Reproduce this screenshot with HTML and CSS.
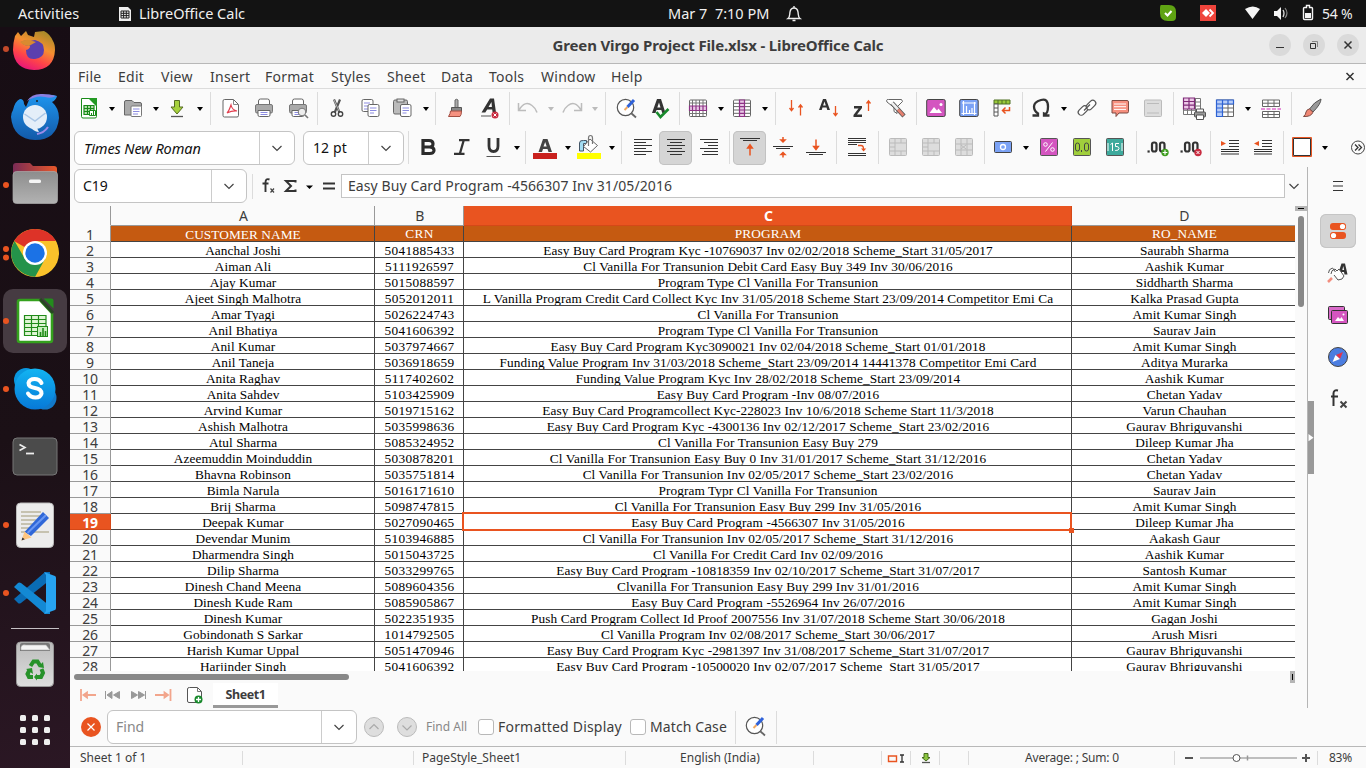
FILE: index.html
```html
<!DOCTYPE html>
<html lang="en">
<head>
<meta charset="utf-8">
<title>Green Virgo Project File.xlsx - LibreOffice Calc</title>
<link rel="stylesheet" href="styles.css">
</head>
<body>
<header class="topbar">
  <span class="activities">Activities</span>
  <svg class="app-icon" viewBox="0 0 14 16"><path d="M1 1h9l3 3v11H1z" fill="#eee"/><path d="M3 5h8v7H3zM3 7.300h8M3 9.600h8M5.600 5v7M8.300 5v7" fill="none" stroke="#222"/></svg>
  <span class="app-name">LibreOffice Calc</span>
  <span class="clock">Mar 7&nbsp; 7:10 PM</span>
  <svg class="bell" viewBox="0 0 16 18"><path d="M2 13.500h12c-2-1.500-1.500-3-2-6.500C11.600 4.500 10 3 8 3S4.400 4.500 4 7c-.5 3.500 0 5-2 6.500zM8 1v2M6.500 15.500h3" fill="none" stroke="#eee" stroke-width="1.400"/></svg>
  <svg class="tray" viewBox="0 0 200 27">
    <path d="M8 5h8q7 0 7 7v5q0 4-4 4h-4q-8 0-8-8V8q0-3 1-3z" fill="#5fa313"/><path d="M12 13l2.500 2.500 4-4.500" fill="none" stroke="#fff" stroke-width="2"/>
    <path d="M47 5h16v16H47z" fill="#ef443b"/><path d="M53 9l4 4-4 4-4-4z" fill="#fff"/><path d="M56.500 9.500l3.500 3.500-3.500 3.500" fill="none" stroke="#fff" stroke-width="1.800"/>
    <path d="M92 9q8-5 15 0l-7.500 10z" fill="#f5f5f5"/>
    <path d="M121 11h3l4-4v13l-4-4h-3z" fill="#f5f5f5"/><path d="M130 10q2 3 0 7" fill="none" stroke="#ddd" stroke-width="1.300"/><path d="M132 8q4 5 0 10" fill="none" stroke="#888" stroke-width="1.200"/>
    <path d="M151.500 7.500h2v-2h3v2h2q1 0 1 1v10q0 1-1 1h-7q-1 0-1-1v-10q0-1 1-1z" fill="none" stroke="#f5f5f5" stroke-width="1.400"/><path d="M152 13h6v5h-6z" fill="#f5f5f5"/>
  </svg>
  <span class="battery">54 %</span>
</header>
<div class="desktop">
<nav class="dock">
  <div class="dock-item first"><svg viewBox="0 0 70 68">
    <defs>
      <linearGradient id="ff" x1=".8" y1="0" x2=".3" y2="1"><stop offset="0" stop-color="#a08a28"/><stop offset=".4" stop-color="#f59030"/><stop offset=".7" stop-color="#ff4548"/><stop offset="1" stop-color="#e6137c"/></linearGradient>
      <linearGradient id="tb" x1="0" y1="0" x2="0" y2="1"><stop offset="0" stop-color="#1f95ee"/><stop offset="1" stop-color="#1259a8"/></linearGradient>
      <linearGradient id="gr" x1="0" y1="0" x2="0" y2="1"><stop offset="0" stop-color="#8d8d8d"/><stop offset="1" stop-color="#b2b2b2"/></linearGradient>
      <linearGradient id="fo" x1="0" y1="0" x2="1" y2="0"><stop offset="0" stop-color="#7a2b55"/><stop offset="1" stop-color="#e9582a"/></linearGradient>
      <linearGradient id="sk" x1="0" y1="0" x2="0" y2="1"><stop offset="0" stop-color="#12b4f2"/><stop offset="1" stop-color="#0779d8"/></linearGradient>
      <linearGradient id="tr" x1="0" y1="0" x2="0" y2="1"><stop offset="0" stop-color="#bbb"/><stop offset="1" stop-color="#dedede"/></linearGradient>
    </defs>
    <circle cx="6" cy="34" r="3" fill="#c2492a"/>
    <path d="M15 21l3-4 3 4 5-5 2 4 6 2 1-5 9-1q6 3 9 10 2 3 2 9-1 20-21 20-20-1-21-20 0-7 2-14z" fill="url(#ff)"/>
    <path d="M21 27q5-3 9-1l5-1q9 2 9 10t-9 9-9-9q4-1 4-4-6 0-9-4z" fill="#5b3fae"/>
    <path d="M20 27q6-3 9-2l7 2-7 4q-5 0-9-4z" fill="#d98a30"/></svg></div>
  <div class="dock-item"><svg viewBox="0 0 70 68">
    <path d="M13 27q2-9 7-11 4 0 4 5l2 3 3-7q5-5 14-5 9-1 14 1-1 4-5 6 7 6 7 16-2 22-24 22Q13 56 11 34q0-4 2-7z" fill="url(#tb)"/>
    <path d="M27 18q5-8 16-7 6 0 13 2-5 3-11 1-9-2-18 4z" fill="#8b7fe0"/><path d="M48 44q-4 6-11 7" stroke="#9b8be8" stroke-width="2" fill="none"/>
    <circle cx="35" cy="34" r="12" fill="#e4eef9"/><path d="M24.500 31l10.500 7 10.500-8" fill="none" stroke="#aac6e6" stroke-width="1.500"/><path d="M31 45q4 4 8 4l-2-4z" fill="#e4eef9"/><circle cx="37" cy="18" r="1" fill="#222"/></svg></div>
  <div class="dock-item"><svg viewBox="0 0 70 68"><circle cx="6" cy="34" r="3" fill="#e95420"/><path d="M13 15q0-3 3-3h14l3 3h21q3 0 3 3v14H13z" fill="url(#fo)"/><rect x="13" y="20.500" width="44.500" height="32" rx="3.500" fill="url(#gr)" stroke="#aaa" stroke-width=".7"/><rect x="29" y="28.500" width="12" height="3.500" rx="1.500" fill="#f5f5f5"/></svg></div>
  <div class="dock-item"><svg viewBox="0 0 70 68"><circle cx="6" cy="30" r="3" fill="#e95420"/><circle cx="6" cy="38.500" r="3" fill="#e95420"/>
    <circle cx="35" cy="34" r="24" fill="#f9c22a"/><path d="M35 34L14 22Q22 10 35 10q14 0 21 12z" fill="#dd3328"/><path d="M14.500 22Q7 35 16 48q7 9 20 10l10-18-11-6-10 6z" fill="#24934a"/><path d="M35 22h21q5 12-1 24-7 11-20 12l10-18z" fill="#fac22b"/><circle cx="35" cy="34" r="12" fill="#fff"/><circle cx="35" cy="34" r="9.700" fill="#1b72e6"/></svg></div>
  <div class="dock-item"><svg viewBox="0 0 70 68"><rect x="3" y="2" width="64" height="64" rx="10" fill="#463b42"/><circle cx="6" cy="34" r="3" fill="#e95420"/>
    <path d="M20 13H40l12 13v27q0 2-2 2H20q-2 0-2-2V15q0-2 2-2z" fill="#fff" stroke="#34a11d" stroke-width="2.600"/><path d="M43.500 11.500h8q2 0 2 2v8z" fill="#238c1d"/><path d="M40 12l13 14" stroke="#274722" stroke-width="3"/>
    <path d="M24.500 28.500H46v20H24.500zM24.500 32.500H46M24.500 36.500H46M24.500 40.500H46M24.500 44.500H46M31.500 28v20M38.500 28v20" fill="#dff5d4" stroke="#218b19" stroke-width="1.200"/><rect x="37.500" y="39.500" width="10" height="10" fill="#c6eebc" stroke="#218b19"/><path d="M40.500 49v-4M43 49v-8M45.500 49v-5" stroke="#218b19" stroke-width="1.600"/></svg></div>
  <div class="dock-item"><svg viewBox="0 0 70 68"><circle cx="6" cy="34" r="3" fill="#e95420"/><circle cx="26" cy="25" r="12" fill="#0997df"/><circle cx="45" cy="43" r="11.500" fill="#1279c9"/><circle cx="35" cy="34" r="20.500" fill="url(#sk)"/><path d="M41.500 28q-2-4-7-4t-6 4q0 4 6.500 5t6.500 5.500q-1 4-6 4t-7.500-4" fill="none" stroke="#fff" stroke-width="4" stroke-linecap="round"/></svg></div>
  <div class="dock-item"><svg viewBox="0 0 70 68"><rect x="13" y="15" width="44" height="37" rx="4" fill="#4b4b4b" stroke="#777"/><path d="M19.500 21.500l5.500 3-5.500 3" fill="none" stroke="#eee" stroke-width="1.600"/><path d="M26 30.500h8" stroke="#eee" stroke-width="1.800"/></svg></div>
  <div class="dock-item"><svg viewBox="0 0 70 68"><circle cx="6" cy="34" r="3" fill="#e95420"/><rect x="16.500" y="12" width="37" height="44.500" rx="4" fill="#ececec" stroke="#bbb"/><path d="M21 21h20M21 25h20M21 29h15M21 33h14M21 37h10M21 41h28" stroke="#c6c2b0" stroke-width="1.800"/><path d="M24.500 41L43 21l6 6-18 18z" fill="#2f67d8"/><path d="M27.500 42L46 24" stroke="#6b98f2" stroke-width="2"/><path d="M24.500 40.500l7 6-10 3z" fill="#ffc680"/><path d="M22.500 46.500l2.300 1.800-3.300 1.200z" fill="#333"/></svg></div>
  <div class="dock-item"><svg viewBox="0 0 70 68"><circle cx="6" cy="34" r="3" fill="#e95420"/><path d="M14 40l4 4q1 1 3 0l29-23V13h-5z" fill="#0a6cb5"/><path d="M14 28l4-4q1-1 3 0l29 23v8h-5z" fill="#1389d4"/><path d="M44 13l11 4q1 .5 1 2v30q0 1.500-1 2l-11 4 2-3V16z" fill="#27a4f1"/></svg></div>
  <hr class="dock-line">
  <div class="dock-item"><svg viewBox="0 0 70 68"><rect x="16.500" y="12" width="37" height="44.500" rx="4" fill="url(#tr)" stroke="#999"/><path d="M20 15q0-2 2-2h26q2 0 2 2v6H20z" fill="#777"/><path d="M21 20q-1-6 5-5h20l4 5z" fill="#f4f4f4" stroke="#aaa" stroke-width=".6"/><g fill="none" stroke="#27922a" stroke-width="4"><path d="M30.500 36l3-4.500h4l2.500 4"/><path d="M41.500 39l1.500 4-2 4h-4"/><path d="M33 47h-4l-1.500-3 2-4"/></g><path d="M38 37l6 1-1-6zM37 43.500v7l-3-3.500zM26 39l6-1 1 6z" fill="#27922a"/></svg></div>
  <div class="app-grid"><i></i><i></i><i></i><i></i><i></i><i></i><i></i><i></i><i></i></div>
</nav>
<main class="window">
  <div class="titlebar"><h1>Green Virgo Project File.xlsx - LibreOffice Calc</h1>
    <div class="win-buttons">
      <span><svg viewBox="0 0 22 22"><path d="M7 13.500h8" stroke="#333"/></svg></span>
      <span><svg viewBox="0 0 22 22"><path d="M7.500 9.500h5v5h-5z" fill="none" stroke="#333"/><path d="M9 7.500h5.500V13" fill="none" stroke="#888"/></svg></span>
      <span><svg viewBox="0 0 22 22"><path d="M7.500 7.500l7 7m0-7l-7 7" stroke="#333" stroke-width="1.500"/></svg></span>
    </div>
  </div>
  <div class="menubar"><span>File</span><span>Edit</span><span>View</span><span>Insert</span><span>Format</span><span>Styles</span><span>Sheet</span><span>Data</span><span>Tools</span><span>Window</span><span>Help</span><svg class="doc-close" viewBox="0 0 12 12"><path d="M2.500 2l7 7m0-7l-7 7" stroke="#333" stroke-width="1.500"/></svg></div>

  <div class="toolbar standard">
    <span class="b"><svg viewBox="0 0 24 24"><path d="M4.500 2.500h9l6 6v12q0 1.500-1.500 1.500H6q-1.500 0-1.500-1.500z" fill="#fff" stroke="#188a18"/><path d="M11 2h9v9z" fill="#239a23"/><path d="M7 9.500h10v9H7zM7 12.500h10M7 15.500h10M10.500 9v10M13.500 9v10" fill="#b9e0b0" stroke="#188a18" stroke-width="1.200"/><path d="M12.500 14.500h6v5h-6z" fill="#fff" stroke="#188a18"/><path d="M14.500 19v-2m2 2v-4" stroke="#188a18"/></svg></span><i class="a"></i>
    <span class="b"><svg viewBox="0 0 24 24"><path d="M3.500 19V6q0-1.500 1.500-1.500h6l2 2h6q1.500 0 1.500 1.500v3" fill="#aaa" stroke="#666"/><path d="M3.500 19h7V8h-7z" fill="#aaa"/><path d="M3.500 8v11h7" fill="none" stroke="#666"/><rect x="10" y="10" width="10.500" height="10.500" rx="1" fill="#fff" stroke="#777"/><path d="M12 13h6.500M12 15.500h6.500M12 18h5" stroke="#8b8be0"/></svg></span><i class="a"></i>
    <span class="b"><svg viewBox="0 0 24 24"><path d="M9.500 4.500h5V11h3.500l-6 7-6-7h3.500z" fill="#a6d13c" stroke="#566b23"/><path d="M6 20.500h12" stroke="#555" stroke-width="1.300"/></svg></span><i class="a"></i>
    <i class="s s10"></i>
    <span class="b"><svg viewBox="0 0 24 24"><path d="M5.500 3.500h9l5 5v11q0 1.500-1.500 1.500H5.500q-1.500 0-1.500-1.500V5q0-1.500 1.500-1.500z" fill="#fff" stroke="#666"/><path d="M14.500 3.500v5h5" fill="none" stroke="#888"/><path d="M8 17q2-2 4-8 1 5 6 6-5-.5-10 2" fill="none" stroke="#e24050" stroke-width="1.200"/></svg></span>
    <span class="b"><svg viewBox="0 0 24 24"><use href="#pr"/></svg></span>
    <span class="b"><svg viewBox="0 0 24 24"><use href="#pr" x="1"/><circle cx="17" cy="16" r="3.800" fill="#eee" stroke="#777"/><path d="M20 19l3 3" stroke="#777" stroke-width="1.600"/></svg></span>
    <i class="s s7"></i>
    <span class="b"><svg viewBox="0 0 24 24"><path d="M9 3.500l5.500 13M15 3.500L9.500 17" stroke="#555" stroke-width="2.200"/><path d="M9 4l5 11" stroke="#ddd" stroke-width=".7"/><circle cx="8.500" cy="18" r="2.200" fill="#fff" stroke="#444" stroke-width="1.400"/><circle cx="15.500" cy="18" r="2.200" fill="#fff" stroke="#444" stroke-width="1.400"/></svg></span>
    <span class="b"><svg viewBox="0 0 24 24"><rect x="4" y="3.500" width="11" height="12" rx="1.500" fill="#fff" stroke="#666"/><path d="M6 7h6M6 10h4M6 13h4" stroke="#8b8be0"/><rect x="10" y="8.500" width="11" height="12" rx="1.500" fill="#fff" stroke="#666"/><path d="M12 12h6.500M12 14.500h6.500M12 17h4" stroke="#8b8be0"/></svg></span>
    <span class="b"><svg viewBox="0 0 24 24"><rect x="2.500" y="4" width="14" height="14" rx="1.500" fill="#bbb" stroke="#666"/><rect x="6" y="3" width="7" height="3" fill="#ddd" stroke="#666"/><rect x="9.500" y="8.500" width="10.500" height="12" rx="1.500" fill="#fff" stroke="#666"/><path d="M11.500 12h6.500M11.500 14.500h6.500M11.500 17h4" stroke="#8b8be0"/></svg></span><i class="a"></i>
    <i class="s s9"></i>
    <span class="b"><svg viewBox="0 0 24 24"><path d="M11 12V4q1.500-1.500 3 0v8z" fill="#aaa" stroke="#666"/><path d="M7.500 11.500h10v4h-10z" fill="#888" stroke="#555"/><path d="M6.500 15h11q0 4-1.500 5.500H4.500q2-3 2-5.500z" fill="#f59180" stroke="#a34e42"/></svg></span>
    <span class="b"><svg viewBox="0 0 24 24"><path d="M4.500 16.500L13 2.500h4l2 14h-3.400l-.4-3h-5L8.300 16.500zM11.500 11h3.400L14.500 6z" fill="#333"/><path d="M4 20h10" stroke="#555"/><circle cx="18" cy="19" r="3.500" fill="#c92c41"/><path d="M16.500 17.500l3 3m0-3l-3 3" stroke="#fff"/></svg></span>
    <i class="s s6"></i>
    <span class="b"><svg viewBox="0 0 24 24"><path d="M2.500 7v7.500h7.500M3 14Q9 4 16 9.500q4 3 5 7" fill="none" stroke="#bcbcbc" stroke-width="1.500"/></svg></span><i class="a dim"></i>
    <span class="b"><svg viewBox="0 0 24 24"><path d="M21.500 7v7.500H14M21 14Q15 4 8 9.500q-4 3-5 7" fill="none" stroke="#bcbcbc" stroke-width="1.500"/></svg></span><i class="a dim"></i>
    <i class="s s10"></i>
    <span class="b"><svg viewBox="0 0 24 24"><use href="#fr"/></svg></span>
    <span class="b"><svg viewBox="0 0 24 24"><path d="M5 17L10 3h4l4.500 14h-3.200l-1-3H9.500l-1 3zM10.300 11.500h3.200L12 6.500z" fill="#333"/><path d="M9.500 16l4 5 8-8" fill="none" stroke="#188a2c" stroke-width="2.600"/></svg></span>
    <i class="s s6"></i>
    <span class="b"><svg viewBox="0 0 24 24"><rect x="3.500" y="4" width="17" height="16.500" rx="1" fill="#fff" stroke="#666"/><path d="M3.500 7h17M3.500 17.500h17M6.500 4v16M10 4v16M13.500 4v16M17 4v16" stroke="#777"/><path d="M3.500 10h17v4.500h-17zM6.500 10v5M10 10v5M13.500 10v5M17 10v5" fill="#e9c8e6" stroke="#8e3286" stroke-width="1.200"/></svg></span><i class="a"></i>
    <span class="b"><svg viewBox="0 0 24 24"><rect x="3.500" y="4" width="17" height="16.500" rx="1" fill="#fff" stroke="#666"/><path d="M3.500 7.300h17M3.500 10.600h17M3.500 14h17M3.500 17.300h17" stroke="#666"/><path d="M9.500 4h5v16.500h-5zM9.500 7.300h5M9.500 10.600h5M9.500 14h5M9.500 17.300h5" fill="#e9c8e6" stroke="#8e3286" stroke-width="1.200"/></svg></span><i class="a"></i>
    <i class="s s10"></i>
    <span class="b"><svg viewBox="0 0 24 24"><path d="M7.500 4v11M5.500 12l2 2.700 2-2.700M16.500 19.500V9M14.500 11.500l2-2.700 2 2.700" fill="none" stroke="#e95420" stroke-width="1.300"/></svg></span>
    <span class="b"><svg viewBox="0 0 24 24"><path d="M2 14L6 3h3l4 11h-2.700l-.8-2.500h-4L4.700 14zM6.100 9.500h2.700L7.500 5.500z" fill="#333"/><path d="M18.500 10v9.500M16.500 17l2 2.700 2-2.700" fill="none" stroke="#e95420" stroke-width="1.300"/></svg></span>
    <span class="b"><svg viewBox="0 0 24 24"><path d="M4 10h8v2l-5 6.500h5v2.500H3.500v-2l5-6.500H4z" fill="#333"/><path d="M18.500 15V5M16.500 7.500l2-2.700 2 2.700" fill="none" stroke="#e95420" stroke-width="1.300"/></svg></span>
    <span class="b"><svg viewBox="0 0 24 24"><path d="M3.500 4.500q0-1 2-1h13l1 2-5.500 5.500v6.500l-3-2v-4L4 6z" fill="#fff" stroke="#666"/><path d="M9 7l12 13" stroke="#555" stroke-width="4.400"/><path d="M8.500 6.500l6.500 7" stroke="#eee" stroke-width="2.600"/><path d="M15 13.500l5.500 6" stroke="#e5806f" stroke-width="2.800"/></svg></span>
    <i class="s s8"></i>
    <span class="b"><svg viewBox="0 0 24 24"><rect x="2.700" y="3.500" width="18.500" height="17" rx="1.500" fill="#d455c0" stroke="#444"/><path d="M5.500 17l4.500-6 3 3.500 1.500-2L18 17z" fill="#fff"/><circle cx="17" cy="8.500" r="1.500" fill="#fff"/></svg></span>
    <span class="b"><svg viewBox="0 0 24 24"><rect x="2.700" y="3.500" width="18.500" height="17" rx="1.500" fill="#7ba2f5" stroke="#444"/><path d="M6.500 5v14M4.500 17.500h15M17.500 6v13M5 7h14M9.500 17v-7M12.500 17v-3M15 17v-5" fill="none" stroke="#fff" stroke-width="1.200"/></svg></span>
    <span class="b"><svg viewBox="0 0 24 24"><path d="M4 4h16v4H4zM8 4v4M12 4v4M16 4v4" fill="#9ac93a" stroke="#507024"/><path d="M4 8h4v12H4zM4 12h4M4 16h4" fill="#fff" stroke="#555"/><path d="M19.500 11v3.500H13M15.500 11.500L12.500 14.500l3 3" fill="none" stroke="#e95420" stroke-width="1.500"/></svg></span>
    <i class="s s6"></i>
    <span class="b"><svg viewBox="0 0 24 24"><path d="M3.500 19.500h5.500v-2q-4-2.500-4-7T12 4t7 6.500-4 7v2h5.500" fill="none" stroke="#333" stroke-width="2.300"/></svg></span><i class="a"></i><i class="gap"></i>
    <span class="b"><svg viewBox="0 0 24 24"><g fill="none" stroke="#555" stroke-width="1.200"><rect x="2.500" y="11.500" width="11" height="6" rx="3" transform="rotate(-45 8 14.500)" fill="#fff"/><rect x="10.500" y="6" width="11" height="6" rx="3" transform="rotate(-45 16 9)" fill="#fff"/></g><path d="M9 14.500l6-6" stroke="#555" stroke-width="1.300"/></svg></span>
    <span class="b"><svg viewBox="0 0 24 24"><path d="M4 4.500h15q1.500 0 1.500 1.500v9.500q0 1.500-1.500 1.500h-8L8 20.500V17H4z" fill="#f68f7e" stroke="#7d4b43"/><path d="M6 8h12M6 10.700h12M6 13.400h12" stroke="#fff"/></svg></span>
    <span class="b"><svg viewBox="0 0 24 24"><rect x="3.500" y="4" width="17" height="16.500" rx="1" fill="#ddd" stroke="#bbb"/><path d="M6 7.500h12M6 17h12" stroke="#bbb"/></svg></span>
    <i class="s s6"></i>
    <span class="b"><svg viewBox="0 0 24 24"><path d="M3.500 2.500h17v16h-17zM3.500 6h17M3.500 10h17M3.500 14.300h17M7.500 3v16M11.500 3v16M15.500 3v16" fill="#fff" stroke="#777"/><path d="M3.500 2h11v11h-11zM3.500 5.500h11M3.500 9.200h11M9 2v11" fill="#edc9e8" stroke="#7f2b78" stroke-width="1.200"/><path d="M16.500 16v-3h7v3" fill="#fff" stroke="#555"/><rect x="14.500" y="16" width="11" height="5" rx="1" fill="#999" stroke="#555"/><path d="M16.500 19h7v4.500h-7z" fill="#fff" stroke="#555"/></svg></span>
    <span class="b"><svg viewBox="0 0 24 24"><path d="M3.500 4h17v16.500h-17zM3.500 8h17M3.500 12h17M3.500 16h17M9 4v16M15 4v16" fill="#fff" stroke="#666"/><path d="M3.500 4h17v4H9.500v12.500h-6zM3.500 8h6M3.500 12h6M3.500 16h6M9.500 4v4M15 4v4" fill="#b7cdf8" stroke="#2d62d3" stroke-width="1.200"/></svg></span><i class="a"></i>
    <span class="b"><svg viewBox="0 0 24 24"><path d="M5.500 4h17v6.500h-17zM5.500 7.200h17M11 4v6M17 4v6M5.500 15.500h17v6h-17zM5.500 18.500h17M11 15.500v6M17 15.500v6" fill="#fff" stroke="#666"/><path d="M4 13h20" stroke="#e06bd0" stroke-width="1.300" stroke-dasharray="4 1.500"/></svg></span>
    <i class="s s10"></i>
    <span class="b"><svg viewBox="0 0 24 24"><path d="M9.500 13Q14 6 21 3q0 5-8 13z" fill="#999" stroke="#555"/><path d="M9.500 13l3.500 3.200Q11 21 3.500 20.500q2.500-2 2.500-4.500 1-3 3.500-3z" fill="#f08774" stroke="#7d4b43"/></svg></span>
  </div>

  <div class="toolbar formatting">
    <div class="combo font-name"><em>Times New Roman</em><span class="chev"><svg viewBox="0 0 12 12"><use href="#cv"/></svg></span></div>
    <div class="combo font-size"><b>12 pt</b><span class="chev"><svg viewBox="0 0 12 12"><use href="#cv"/></svg></span></div>
    <i class="s s8"></i>
    <span class="b"><svg viewBox="0 0 24 24"><path d="M7 5.500h6q4 0 4 3.300T13.500 12H7zM7 12h6.500q4.500 0 4.500 3.300t-4.500 3.200H7z" fill="none" stroke="#2b2b2b" stroke-width="3.200"/></svg></span>
    <span class="b"><svg viewBox="0 0 24 24"><path d="M10 5.200h10.500M5 18.800h10.500M14.800 5l-4 14" fill="none" stroke="#333" stroke-width="2.300"/></svg></span>
    <span class="b"><svg viewBox="0 0 24 24"><path d="M7 3v8q0 5.500 4.500 5.500T16 11V3" fill="none" stroke="#333" stroke-width="2.800"/><path d="M4.500 21.500h14" stroke="#555"/></svg></span><i class="a"></i>
    <i class="s s7"></i>
    <span class="b"><svg viewBox="0 0 24 24"><path d="M5.500 17L10 4h4.500L19 17h-3.500l-1-3H10l-1 3zM10.500 11.500h3.200L12.200 7z" fill="#444"/><path d="M0 18h24v6H0z" fill="#c9211e"/></svg></span><i class="a"></i>
    <span class="b"><svg viewBox="0 0 24 24"><path d="M2.500 16V8q0-3 4-2.500h3v3H6.500V16z" fill="#a3dcf2" stroke="#456"/><path d="M6.500 11.500L13 4l7.500 6.500-7 6.500z" fill="#fff" stroke="#666"/><path d="M11.500 11V3q0-2.500 2-2.500t2 2.500v6" fill="none" stroke="#777" stroke-width="1.200"/><path d="M0 18h24v6H0z" fill="#ff0"/></svg></span><i class="a"></i>
    <i class="s s9"></i>
    <span class="b"><svg viewBox="0 0 24 24"><path d="M4 4.500h18M4 7.500h12M4 10.500h18M4 13.500h12M4 16.500h18M4 19.500h12" stroke="#333"/></svg></span>
    <span class="b on"><svg viewBox="0 0 24 24"><path d="M4 4.500h18M7 7.500h12M4 10.500h18M7 13.500h12M4 16.500h18M7 19.500h12" stroke="#333"/></svg></span>
    <span class="b"><svg viewBox="0 0 24 24"><path d="M4 4.500h18M8 7.500h14M12 10.500h10M4 13.500h18M8 16.500h14M6 19.500h16" stroke="#333"/></svg></span>
    <i class="s s8"></i>
    <span class="b on"><svg viewBox="0 0 24 24"><path d="M3 3.500h20M6 5.500h14" stroke="#333"/><path d="M13 20.500V11M10.700 13L13 9.800l2.300 3.200z" fill="#e95420" stroke="#e95420" stroke-width="1.500"/></svg></span>
    <span class="b"><svg viewBox="0 0 24 24"><path d="M3 11.500h20M6 13.500h14" stroke="#333"/><path d="M13 2v3M11 5h4L13 7zM13 22.500v-3M11 19.500h4L13 17.500z" fill="#e95420" stroke="#e95420" stroke-width="1.500"/></svg></span>
    <span class="b"><svg viewBox="0 0 24 24"><path d="M3 17.500h20M6 19.500h14" stroke="#333"/><path d="M13 4.500V14M10.700 11.500L13 14.500l2.300-3z" fill="#e95420" stroke="#e95420" stroke-width="1.500"/></svg></span>
    <i class="s s9"></i>
    <span class="b"><svg viewBox="0 0 24 24"><path d="M3 3.500h18M3 5.500h18M3 7.500h18M3 9.500h9M3 18.500h18M3 20.500h18" stroke="#333"/><path d="M13 10.500h3q2.500 0 2.500 3.500" fill="none" stroke="#e95420" stroke-width="1.300"/><path d="M16 13.500h5.200L18.600 16.500z" fill="#e95420"/></svg></span>
    <i class="s s8"></i>
    <span class="b"><svg viewBox="0 0 24 24"><use href="#mg"/></svg></span>
    <span class="b"><svg viewBox="0 0 24 24"><use href="#mg"/></svg></span>
    <span class="b"><svg viewBox="0 0 24 24"><rect x="3.500" y="3.500" width="17" height="17" rx="1" fill="#ddd" stroke="#bbb"/><path d="M3.500 9h17M3.500 15h17M9 3.500v17M15 3.500v17M9 10l5 4m0-4l-5 4" stroke="#bbb" fill="none"/></svg></span>
    <i class="s s6"></i>
    <span class="b"><svg viewBox="0 0 24 24"><rect x="3.500" y="6.500" width="17" height="11" rx="1" fill="#7ba2f5" stroke="#444"/><circle cx="12" cy="12" r="2.500" fill="none" stroke="#fff" stroke-width="1.300"/></svg></span><i class="a"></i><i class="gap"></i>
    <span class="b"><svg viewBox="0 0 24 24"><rect x="3.500" y="3.500" width="17" height="17" rx="1" fill="#d455c0" stroke="#555"/><circle cx="8.500" cy="9.500" r="1.800" fill="none" stroke="#fff"/><circle cx="15.500" cy="14.500" r="1.800" fill="none" stroke="#fff"/><path d="M15.500 7.500l-7 9" stroke="#fff"/></svg></span>
    <span class="b"><svg viewBox="0 0 24 24"><rect x="3.500" y="3.500" width="17" height="17" rx="1" fill="#a0cf3c" stroke="#555"/><rect x="5.500" y="8" width="4" height="8" rx="2" fill="none" stroke="#444"/><rect x="14.500" y="8" width="4" height="8" rx="2" fill="none" stroke="#444"/><path d="M11.500 15v2" stroke="#444"/></svg></span>
    <span class="b"><svg viewBox="0 0 24 24"><rect x="3.500" y="3.500" width="17" height="17" rx="1" fill="#3eaa9d" stroke="#555"/><path d="M5 8v8M19 8v8M7.500 9.500l2-1.500v8M16 8.500h-3.500v3H14q2 .3 2 2.200t-3.800 1.800" fill="none" stroke="#fff"/></svg></span>
    <i class="s s9"></i>
    <span class="b"><svg viewBox="0 0 24 24"><use href="#dz"/><circle cx="20" cy="17.500" r="3.700" fill="#3f9d20"/><path d="M17.700 17.500h4.600M20 15.200v4.600" stroke="#fff" stroke-width="1.200"/></svg></span>
    <span class="b"><svg viewBox="0 0 24 24"><use href="#dz"/><circle cx="20" cy="17.500" r="3.700" fill="#c92c41"/><path d="M18.500 16l3 3m0-3l-3 3" stroke="#fff"/></svg></span>
    <i class="s s7"></i>
    <span class="b"><svg viewBox="0 0 24 24"><path d="M11 5.500h10M11 8.500h10M11 11.500h10M3 14.500h18M3 16.500h18M3 19h18" stroke="#333" stroke-width="1.200"/><path d="M3 6l5 2.500L3 11z" fill="#e95420"/></svg></span>
    <span class="b"><svg viewBox="0 0 24 24"><path d="M11 5.500h10M11 8.500h10M11 11.500h10M3 14.500h18M3 16.500h18M3 19h18" stroke="#333" stroke-width="1.200"/><path d="M8 6L3 8.500 8 11z" fill="#e95420"/></svg></span>
    <i class="s s6"></i>
    <span class="b"><svg viewBox="0 0 24 24"><path d="M2.500 2.500h19v19h-19z" fill="#fff" stroke="#e95420"/><path d="M3.500 3.500h17v17h-17z" fill="#fff" stroke="#333"/></svg></span><i class="a"></i>
    <svg class="more" viewBox="0 0 16 16"><circle cx="8" cy="7.500" r="6.500" fill="none" stroke="#444"/><path d="M5 4.500l3 3-3 3M8.500 4.500l3 3-3 3" fill="none" stroke="#333" stroke-width="1.300"/></svg>
  </div>

  <div class="work">
  <div class="document">
    <div class="formula">
      <div class="combo cell-name"><b>C19</b><span class="chev"><svg viewBox="0 0 12 12"><use href="#cv"/></svg></span></div>
      <i class="s name-sep"></i>
      <svg class="fx-tools" viewBox="0 0 80 24"><path d="M9.500 5.500q-4-1.500-4 3V18M2.500 9.500h6" fill="none" stroke="#333" stroke-width="1.900"/><path d="M10.500 14.500l3.500 4m0-4l-3.500 4" stroke="#444" stroke-width="1.200"/><path d="M35.500 8.500V7H26l5 5-5 5h9.500V15.500" fill="none" stroke="#333" stroke-width="2"/><path d="M46 11.500h7L49.500 15z" fill="#000"/><path d="M63 9.500h12M63 14.500h12" stroke="#333" stroke-width="2"/></svg>
      <div class="formula-input">Easy Buy Card Program -4566307 Inv 31/05/2016</div>
      <svg class="expand" viewBox="0 0 12 12"><use href="#cv"/></svg>
    </div>
    <div class="sheet-area">
      <div class="grid" id="grid"></div>
      <div class="vscroll"><i class="split"></i><i class="thumb"></i></div>
    </div>
    <div class="hscroll"><i class="thumb"></i><i class="split"></i></div>
    <div class="tabs">
      <svg class="tab-nav" viewBox="0 0 140 24">
        <g stroke="#f2a58c" fill="#f2a58c" stroke-width="1.800"><path d="M11 6v12M14 12h12M17 9.500L13.500 12l3.500 2.500zM100.500 6v12M85 12h12M94.500 9.500l3.500 2.500-3.500 2.500z"/></g>
        <path d="M35.500 8v8M42 8.500v7L37 12zM49.500 8.500v7L43.500 12z" stroke="#999" fill="#999"/><path d="M75.500 8v8M61.500 8.500v7l6-3.500zM68.500 8.500v7l6-3.500z" stroke="#999" fill="#999"/>
        <path d="M119.500 4.500h8l4 4V18q0 1.500-1.500 1.500h-11q-1.500 0-1.500-1.500V6q0-1.500 2-1.500z" fill="#fff" stroke="#555"/><path d="M127.500 4.500v4h4" fill="none" stroke="#777"/><circle cx="128.500" cy="16.500" r="4" fill="#188a2c"/><path d="M126 16.500h5M128.500 14v5" stroke="#fff" stroke-width="1.300"/></svg>
      <span class="tab">Sheet1</span>
    </div>
  </div>
  <aside class="sidebar">
    <svg class="handle" viewBox="0 0 6 73"><path d="M0 0h6v73H0z" fill="#999"/><path d="M.5 33l5 3.700-5 3.600z" fill="#fff"/></svg>
    <div class="side-icons">
      <span class="menu-btn"><svg viewBox="0 0 24 24"><path d="M7 6.500h10M7 11h10M7 15.500h10" stroke="#333" stroke-width="1.200"/></svg></span>
      <span class="side on"><svg viewBox="0 0 24 24"><rect x="4" y="4" width="16" height="7" rx="3" fill="#e95420"/><rect x="4" y="13" width="16" height="7" rx="3" fill="#e95420"/><circle cx="16.500" cy="7.500" r="2.600" fill="#fff"/><circle cx="7.500" cy="16.500" r="2.600" fill="#fff"/></svg></span>
      <span class="side"><svg viewBox="0 0 24 24"><path d="M12 13l3.500-10.500H19l2.500 11h-3l-.5-2.500h-2.500L15 13z" fill="#333"/><path d="M17.300 5l-1 4h1.800z" fill="#fff"/><path d="M2 21l4-4" stroke="#f28e7e" stroke-width="2.500"/><path d="M2.500 12q0-4 4-5l3 4M5 13q0-4 4-5l2 2 2-2 5 7-2 3-4 1-4-5" fill="#fff" stroke="#555"/></svg></span>
      <span class="side"><svg viewBox="0 0 24 24"><rect x="2.500" y="3.500" width="16" height="13" rx="1" fill="#d96bc9" stroke="#333"/><rect x="5.500" y="7.500" width="16" height="13" rx="1" fill="#d455c0" stroke="#333"/><path d="M9 18l3-4 2 2 1.500-2 2.500 4z" fill="#fff"/><circle cx="17.500" cy="11.500" r="1" fill="#fff"/></svg></span>
      <span class="side"><svg viewBox="0 0 24 24"><circle cx="12" cy="12" r="9.500" fill="#4b7de0" stroke="#444"/><path d="M17 7l-3 7-4-4z" fill="#e3344a"/><path d="M6.500 17l3-7 4.500 4z" fill="#fff"/></svg></span>
      <span class="side"><svg viewBox="0 0 24 24"><path d="M12 3.500q-4.500-1-4.500 3V19M5 9.500h7" fill="none" stroke="#333" stroke-width="2"/><path d="M14.500 14.500l6 6m0-6l-6 6" stroke="#444" stroke-width="2"/></svg></span>
    </div>
  </aside>
  </div>

  <div class="findbar">
    <svg class="close" viewBox="0 0 20 20"><circle cx="10" cy="10" r="10" fill="#e95420"/><path d="M6.500 6.500l7 7m0-7l-7 7" stroke="#fff" stroke-width="1.200"/></svg>
    <div class="combo find"><b>Find</b><span class="chev"><svg viewBox="0 0 12 12"><use href="#cv"/></svg></span></div>
    <svg class="round" viewBox="0 0 20 20"><circle cx="10" cy="10" r="9.500" fill="#dedede" stroke="#bbb"/><path d="M5.500 12L10 7.500l4.500 4.500" fill="none" stroke="#aaa" stroke-width="1.200"/></svg>
    <svg class="round down" viewBox="0 0 20 20"><circle cx="10" cy="10" r="9.500" fill="#dedede" stroke="#bbb"/><path d="M5.500 8.500L10 13l4.500-4.500" fill="none" stroke="#aaa" stroke-width="1.200"/></svg>
    <span class="find-all">Find All</span>
    <i class="check"></i><span class="check-label fd">Formatted Display</span>
    <i class="check"></i><span class="check-label mc">Match Case</span>
    <i class="s s8"></i><span class="b"><svg viewBox="0 0 24 24"><use href="#fr"/></svg></span><i class="s s8"></i>
  </div>
  <footer class="status">
    <span class="st-sheet">Sheet 1 of 1</span><span></span><span class="st-page">PageStyle_Sheet1</span><span class="st-lang">English (India)</span><span></span>
    <span><svg viewBox="0 0 29 20"><path d="M6.500 9h8v5.500h-8z" fill="none" stroke="#e95420" stroke-width="1.400"/><path d="M18 8h4M18 15h4M20 8v7" stroke="#333" stroke-width="1.300"/></svg></span>
    <span><svg viewBox="0 0 29 20"><path d="M13 6.500h4v4h2l-4 3.500-4-3.500h2z" fill="#8cc63f" stroke="#456b1c"/><path d="M11 15.500h8" stroke="#555" stroke-width="1.300"/></svg></span>
    <span></span><span class="st-sum">Average: ; Sum: 0</span>
    <span><svg class="zoom" viewBox="0 0 143 20"><path d="M10 11h8M127 11h8M131 7v8" stroke="#555" stroke-width="2"/><path d="M25 11h97" stroke="#aaa" stroke-width="1.500"/><path d="M72.500 8.500v5" stroke="#999" stroke-width="1.500"/><circle cx="61.500" cy="11" r="3.500" fill="#fff" stroke="#555"/></svg></span>
    <span class="st-zoom">83%</span>
  </footer>
</main>
</div>
<svg class="defs" aria-hidden="true"><defs>
  <g id="cv"><path d="M1.500 4L6 8.500 10.500 4" fill="none" stroke="#444" stroke-width="1.200"/></g>
  <g id="pr"><path d="M6.500 8V5q0-2 2-2h7q2 0 2 2v3" fill="#fff" stroke="#666"/><rect x="3.500" y="8.500" width="17" height="8.500" rx="1.500" fill="#aaa" stroke="#777"/><path d="M6 14.500h12V19q0 1.500-1.500 1.500h-9Q6 20.500 6 19z" fill="#fff" stroke="#666"/><path d="M8.500 16.500h7M8.500 18.500h7" stroke="#8b8be0"/></g>
  <g id="fr"><circle cx="11.500" cy="11.500" r="8.200" fill="#fff" stroke="#555" stroke-width="1.200"/><path d="M17 17l5 4.500" stroke="#666" stroke-width="1.800"/><path d="M13.500 11L20 4" stroke="#2f62d9" stroke-width="3"/><path d="M10.500 14l3-3" stroke="#f0a860" stroke-width="2"/></g>
  <g id="mg"><rect x="3.500" y="3.500" width="17" height="17" rx="1" fill="#ddd" stroke="#bbb"/><path d="M3.500 8h17M3.500 12h5.500M3.500 16h17M9 3.500v17M15 3.500V8M15 16v4.500" stroke="#bbb"/></g>
  <g id="dz" fill="none" stroke="#333" stroke-width="2.200"><rect x="7" y="7.500" width="4.500" height="9" rx="2"/><rect x="15" y="7.500" width="4.500" height="9" rx="2"/><path d="M2.500 16.500h2.200"/></g>
</defs></svg>
<script src="sheet.js"></script>
</body>
</html>
```
FILE: styles.css
```css
*{box-sizing:border-box}
body{margin:0;width:1366px;height:768px;overflow:hidden;font-family:"Noto Sans",sans-serif;font-size:14px;color:#3d3d3d;background:#fafafa}
svg{display:block;overflow:visible;flex:none}
.defs{width:0;height:0}
.topbar{height:27px;background:#131313;color:#f0f0f0;display:flex;align-items:center;line-height:27px;white-space:nowrap;font-size:14.500px}
.activities{width:101px;padding-left:18px;letter-spacing:.1px;flex:none}
.app-icon{width:14px;height:16px;margin-left:17px}
.app-name{width:536px;padding-left:7px;flex:none}
.clock{width:118px;flex:none}
.bell{width:16px;height:18px}
.tray{width:200px;height:27px;margin-left:351px}
.battery{margin-left:-31px;font-size:14px;letter-spacing:-.2px}
.desktop{display:flex;height:741px}
.dock{width:70px;flex:none;background:linear-gradient(170deg,#170d14,#1b1016 55%,#2b1724);overflow:hidden}
.dock-item svg{width:70px;height:68px}
.dock-item.first{height:56px;display:flex;align-items:flex-end}
.dock-line{width:48px;height:1px;margin:1px 11px;border:0;background:#c5c0c4}
.app-grid{display:grid;grid-template-columns:6px 6px 6px;gap:6px;padding:17px 20px}
.app-grid i{width:6px;height:6px;border-radius:1.500px;background:#eee}
.window{width:1296px;background:#fafafa;display:flex;flex-direction:column}
.titlebar{height:37px;background:#ebebeb;border-bottom:1px solid #b8b8b8;display:grid;grid-template-columns:1fr 97px;align-items:center}
.titlebar h1{font-size:15px;line-height:36px;margin:0;padding-left:97px;text-align:center;letter-spacing:-.16px;white-space:nowrap}
.win-buttons{display:flex;gap:12px}
.win-buttons span{width:22px;height:22px;border-radius:50%;background:#dadada}
.menubar{height:25px;display:grid;grid-template-columns:40px 43px 49px 55px 66px 56px 54px 48px 52px 70px 733px 12px;padding-left:8px;line-height:25px;border-bottom:1px solid #dcdcdc;align-items:center;white-space:nowrap;letter-spacing:.25px}
.doc-close{width:12px;height:12px}
.toolbar{display:flex;height:39px;align-items:center;flex:none}
.standard{padding-left:3px}
.formatting{padding-left:4px}
.b{width:33px;height:34px;padding:4px 5px 6px 4px;flex:none}
.b svg{width:24px;height:24px}
.b.on{background:#d5d5d5;border-radius:5px;box-shadow:inset 0 0 0 1px #c2c2c2}
.a{width:11px;height:34px;flex:none;display:flex;align-items:center;justify-content:center}
.a::before{content:"";border:3.500px solid transparent;border-top:4px solid #000;border-bottom:0;margin-top:1px}
.a.dim::before{border-top-color:#bbb}
.s{height:33px;flex:none;background:linear-gradient(#dcdcdc,#dcdcdc) center/1px 100% no-repeat}
.s6{width:6px}.s7{width:7px}.s8{width:8px}.s9{width:9px}.s10{width:10px}
.gap{width:2px;flex:none}
.combo{height:34px;border:1px solid #c4c4c4;border-radius:6px;background:#fff;display:flex;align-items:center;color:#111;flex:none;line-height:32px}
.combo b{font-weight:400}
.combo>:first-child{flex:1;padding-left:8px;white-space:nowrap}
.chev{height:100%;border-left:1px solid #ccc;display:grid;place-items:center;width:35px}
.chev svg{width:12px;height:12px}
.font-name{width:221px;margin-right:8px}
.font-name em{letter-spacing:-.1px;font-size:14.500px;padding-left:9px!important;line-height:30px}
.font-size{width:101px}
.font-size b{line-height:30px;padding-left:9px!important;letter-spacing:.1px}
.more{width:16px;height:16px;margin-left:20px}
.work{display:flex;height:541px}
.document{width:1237px;flex:none;display:flex;flex-direction:column}
.formula{height:39px;display:flex;align-items:center;padding:0 0 1px 4px;flex:none}
.cell-name{width:173px}
.name-sep{width:11px;height:25px}
.fx-tools{width:80px;height:24px;margin:0 1px 0 2px}
.formula-input{width:944px;height:24px;border:1px solid #c4c4c4;background:#fff;padding-left:6px;line-height:22px;flex:none;letter-spacing:.09px}
.expand{width:12px;height:12px;margin-left:3px}
.sheet-area{height:465px;display:flex;flex:none}
.grid{width:1225px;height:465px;overflow:hidden;background:#fff}
.row{display:grid;grid-template-columns:41px 264px 89px 608px 223px;grid-template-rows:100%;height:16px}
.row span{border-right:1px solid #444;border-bottom:1px solid #444;text-align:center;font:13.300px/18px "Liberation Serif",serif;color:#000;white-space:nowrap;letter-spacing:.1px;padding-left:1px;overflow:hidden}
.row span:nth-child(2){letter-spacing:.06px}
.row span:nth-child(3){letter-spacing:.34px}
.row span:nth-child(5){border-right:0;letter-spacing:.12px;padding-left:2px}
.row .num{border-color:#999;background:#fafafa;font:14px/18px "Noto Sans",sans-serif;color:#3d3d3d;letter-spacing:-.2px;padding-left:0}
.row.letters{height:20px}
.row.letters span{background:#fafafa;border-color:#999;font:14px/20px "Noto Sans",sans-serif;color:#3d3d3d;padding-left:2px}
.row .corner{border-bottom-color:#fafafa!important}
.row.letters .active,.row .num.active{background:#e95420;border-color:#d44818;color:#fff;font-weight:700}
.row.heading span:not(.num){background:#c55a11;color:#fff;line-height:16px}
.row.heading span:nth-child(2){line-height:17px}
.row .cursor{position:relative;overflow:visible}
.cursor::before{content:"";position:absolute;inset:-2px -1px -2px -2px;border:2px solid #e95420}
.cursor::after{content:"";position:absolute;right:-3px;bottom:-4px;width:5px;height:5px;background:#e95420}
.vscroll{width:12px}
.vscroll i,.hscroll i{display:block}
.vscroll .split{height:5px;background:linear-gradient(#000,#000) center/6px 1px no-repeat #b5b5b5}
.vscroll .thumb{width:6px;height:91px;margin:5px 0 0 3px;border-radius:3px;background:#888}
.hscroll{height:13px;display:flex;justify-content:space-between;padding:0 12px 0 4px;flex:none}
.hscroll .thumb{width:275px;height:6px;margin-top:3px;border-radius:3px;background:#888}
.hscroll .split{width:5px;height:12px;background:linear-gradient(#000,#000) center/1px 6px no-repeat #b5b5b5}
.tabs{height:24px;display:flex;flex:none}
.tab-nav{width:140px;height:24px;margin-right:3px;margin-top:-1px}
.tab{width:65px;height:25px;margin-top:-1px;background:#fff;border-bottom:3px solid #999;text-align:center;font-size:12.500px;font-weight:700;line-height:23px;letter-spacing:-.45px}
.sidebar{width:59px;border-left:1px solid #b5b5b5;display:flex}
.handle{width:6px;height:73px;margin-top:234px}
.side-icons{width:36px;margin-left:6px}
.menu-btn{display:block;height:47px;padding:8px 6px}
.side{display:block;width:36px;height:34px;padding:5px 6px;margin-bottom:8px;border-radius:6px}
.side.on{background:#d5d5d5;box-shadow:inset 0 0 0 1px #c5c5c5}
.side-icons svg{width:24px;height:24px}
.findbar{height:39px;border-bottom:1px solid #b8b8b8;display:flex;align-items:center;padding-left:11px;flex:none;white-space:nowrap}
.close,.round{width:20px;height:20px}
.find{width:250px;margin:0 7px 0 6px}
.find b{color:#888}
.round.down{margin-left:13px}
.find-all{width:52px;padding-left:9px;font-size:12px;color:#888;flex:none;line-height:18px;padding-bottom:1px}
.check{width:16px;height:16px;border:1px solid #b8b8b8;border-radius:3px;background:#fff;margin-left:9px;flex:none}
.check+.check-label{margin-left:4px;flex:none;padding-bottom:1px}
.check-label.fd{width:123px;letter-spacing:.2px}
.check-label.mc{width:81px;letter-spacing:.1px}
.status{height:21px;display:grid;grid-template-columns:173px 171px 212px 188px 68px 29px 29px 29px 206px 143px 48px;font-size:12px;line-height:22px;white-space:nowrap;flex:none}
.status span{background:linear-gradient(#dcdcdc,#dcdcdc) right 4px/1px 14px no-repeat}
.status .st-zoom{background:none;padding-left:11px;letter-spacing:-.3px}
.status svg{width:100%;height:20px}
.st-sheet{padding-left:10px}
.st-page{padding-left:8px}
.st-lang,.st-sum{text-align:center}
.st-sum{letter-spacing:-.2px}
```
FILE: sheet.js
```js
const rows = [
  ["CUSTOMER NAME", "CRN", "PROGRAM", "RO_NAME"],
  ["Aanchal Joshi", "5041885433", "Easy Buy Card Program Kyc -10769037 Inv 02/02/2018 Scheme_Start 31/05/2017", "Saurabh Sharma"],
  ["Aiman Ali", "5111926597", "Cl Vanilla For Transunion Debit Card Easy Buy 349 Inv 30/06/2016", "Aashik Kumar"],
  ["Ajay Kumar", "5015088597", "Program Type Cl Vanilla For Transunion", "Siddharth Sharma"],
  ["Ajeet Singh Malhotra", "5052012011", "L Vanilla Program Credit Card Collect Kyc Inv 31/05/2018 Scheme Start 23/09/2014 Competitor Emi Ca", "Kalka Prasad Gupta"],
  ["Amar Tyagi", "5026224743", "Cl Vanilla For Transunion", "Amit Kumar Singh"],
  ["Anil Bhatiya", "5041606392", "Program Type Cl Vanilla For Transunion", "Saurav Jain"],
  ["Anil Kumar", "5037974667", "Easy Buy Card Program Kyc3090021 Inv 02/04/2018 Scheme_Start 01/01/2018", "Amit Kumar Singh"],
  ["Anil Taneja", "5036918659", "Funding Value Program Inv 31/03/2018 Scheme_Start 23/09/2014 14441378 Competitor Emi Card", "Aditya Murarka"],
  ["Anita Raghav", "5117402602", "Funding Value Program Kyc Inv 28/02/2018 Scheme_Start 23/09/2014", "Aashik Kumar"],
  ["Anita Sahdev", "5103425909", "Easy Buy Card Program -Inv 08/07/2016", "Chetan Yadav"],
  ["Arvind Kumar", "5019715162", "Easy Buy Card Programcollect Kyc-228023 Inv 10/6/2018 Scheme Start 11/3/2018", "Varun Chauhan"],
  ["Ashish Malhotra", "5035998636", "Easy Buy Card Program Kyc -4300136 Inv 02/12/2017 Scheme_Start 23/02/2016", "Gaurav Bhriguvanshi"],
  ["Atul Sharma", "5085324952", "Cl Vanilla For Transunion Easy Buy 279", "Dileep Kumar Jha"],
  ["Azeemuddin Moinduddin", "5030878201", "Cl Vanilla For Transunion Easy Buy 0 Inv 31/01/2017 Scheme_Start 31/12/2016", "Chetan Yadav"],
  ["Bhavna Robinson", "5035751814", "Cl Vanilla For Transunion Inv 02/05/2017 Scheme_Start 23/02/2016", "Chetan Yadav"],
  ["Bimla Narula", "5016171610", "Program Typr Cl Vanilla For Transunion", "Saurav Jain"],
  ["Brij Sharma", "5098747815", "Cl Vanilla For Transunion Easy Buy 299 Inv 31/05/2016", "Amit Kumar Singh"],
  ["Deepak Kumar", "5027090465", "Easy Buy Card Program -4566307 Inv 31/05/2016", "Dileep Kumar Jha"],
  ["Devendar Munim", "5103946885", "Cl Vanilla For Transunion Inv 02/05/2017 Scheme_Start 31/12/2016", "Aakash Gaur"],
  ["Dharmendra Singh", "5015043725", "Cl Vanilla For Credit Card Inv 02/09/2016", "Aashik Kumar"],
  ["Dilip Sharma", "5033299765", "Easy Buy Card Program -10818359 Inv 02/10/2017 Scheme_Start 31/07/2017", "Santosh Kumar"],
  ["Dinesh Chand Meena", "5089604356", "Clvanilla For Transunion Easy Buy 299 Inv 31/01/2016", "Amit Kumar Singh"],
  ["Dinesh Kude Ram", "5085905867", "Easy Buy Card Program -5526964 Inv 26/07/2016", "Amit Kumar Singh"],
  ["Dinesh Kumar", "5022351935", "Push Card Program Collect Id Proof 2007556 Inv 31/07/2018 Scheme Start 30/06/2018", "Gagan Joshi"],
  ["Gobindonath S Sarkar", "1014792505", "Cl Vanilla Program Inv 02/08/2017 Scheme_Start 30/06/2017", "Arush Misri"],
  ["Harish Kumar Uppal", "5051470946", "Easy Buy Card Program Kyc -2981397 Inv 31/08/2017 Scheme_Start 31/07/2017", "Gaurav Bhriguvanshi"],
  ["Harjinder Singh", "5041606392", "Easy Buy Card Program -10500020 Inv 02/07/2017 Scheme_Start 31/05/2017", "Gaurav Bhriguvanshi"]
];
const active = { row: 19, column: 2 };
const grid = document.getElementById("grid");

function addRow(className, label, cells, cellClass) {
  const row = document.createElement("div");
  row.className = "row " + className;
  [label, ...cells].forEach((text, i) => {
    const cell = document.createElement("span");
    cell.textContent = text;
    cell.className = cellClass(i - 1);
    row.append(cell);
  });
  grid.append(row);
}

addRow("letters", "", ["A", "B", "C", "D"], c => c < 0 ? "corner" : c === active.column ? "active" : "");
rows.forEach((cells, i) => {
  const n = i + 1;
  addRow(n === 1 ? "heading" : "", n, cells, c =>
    c < 0 ? (n === active.row ? "num active" : "num") : (n === active.row && c === active.column ? "cursor" : ""));
});
```
